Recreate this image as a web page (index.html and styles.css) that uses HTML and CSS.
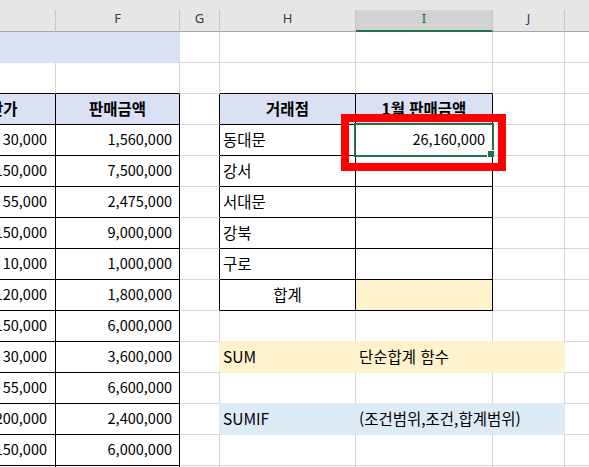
FILE: index.html
```html
<!DOCTYPE html>
<html lang="ko">
<head>
<meta charset="utf-8">
<title>SUMIF</title>
<link rel="stylesheet" href="styles.css">
</head>
<body>
<div class="sheet">
  <div class="row colhead">
    <div class="ch">E</div><div class="ch">F</div><div class="ch">G</div><div class="ch">H</div><div class="ch ch-sel">I</div><div class="ch">J</div><div class="ch">K</div>
  </div>
  <div class="row">
    <div class="c title"></div><div class="c title"></div><div class="c"></div><div class="c"></div><div class="c"></div><div class="c"></div><div class="c"></div>
  </div>
  <div class="row">
    <div class="c bbk"></div><div class="c bbk"></div><div class="c"></div><div class="c bbk"></div><div class="c bbk"></div><div class="c"></div><div class="c"></div>
  </div>
  <div class="row">
    <div class="c bx hd e">판매단가</div><div class="c bx hd">판매금액</div><div class="c brk"></div><div class="c bx hd">거래점</div><div class="c bx hd">1월 판매금액</div><div class="c"></div><div class="c"></div>
  </div>
  <div class="row">
    <div class="c bx num e">30,000</div><div class="c bx num">1,560,000</div><div class="c brk"></div><div class="c bx txt">동대문</div>
    <div class="c bx num active">26,160,000<span class="sel"><span class="handle"></span></span><span class="callout"></span></div>
    <div class="c"></div><div class="c"></div>
  </div>
  <div class="row">
    <div class="c bx num e">150,000</div><div class="c bx num">7,500,000</div><div class="c brk"></div><div class="c bx txt">강서</div><div class="c bx"></div><div class="c"></div><div class="c"></div>
  </div>
  <div class="row">
    <div class="c bx num e">55,000</div><div class="c bx num">2,475,000</div><div class="c brk"></div><div class="c bx txt">서대문</div><div class="c bx"></div><div class="c"></div><div class="c"></div>
  </div>
  <div class="row">
    <div class="c bx num e">150,000</div><div class="c bx num">9,000,000</div><div class="c brk"></div><div class="c bx txt">강북</div><div class="c bx"></div><div class="c"></div><div class="c"></div>
  </div>
  <div class="row">
    <div class="c bx num e">10,000</div><div class="c bx num">1,000,000</div><div class="c brk"></div><div class="c bx txt">구로</div><div class="c bx"></div><div class="c"></div><div class="c"></div>
  </div>
  <div class="row">
    <div class="c bx num e">120,000</div><div class="c bx num">1,800,000</div><div class="c brk"></div><div class="c bx txt center">합계</div><div class="c bx total"></div><div class="c"></div><div class="c"></div>
  </div>
  <div class="row">
    <div class="c bx num e">150,000</div><div class="c bx num">6,000,000</div><div class="c"></div><div class="c"></div><div class="c"></div><div class="c"></div><div class="c"></div>
  </div>
  <div class="row">
    <div class="c bx num e">30,000</div><div class="c bx num">3,600,000</div><div class="c"></div><div class="c band-y txt">SUM</div><div class="c band-y txt spill">단순합계 함수</div><div class="c band-y"></div><div class="c"></div>
  </div>
  <div class="row">
    <div class="c bx num e">55,000</div><div class="c bx num">6,600,000</div><div class="c"></div><div class="c"></div><div class="c"></div><div class="c"></div><div class="c"></div>
  </div>
  <div class="row">
    <div class="c bx num e">200,000</div><div class="c bx num">2,400,000</div><div class="c"></div><div class="c band-b txt">SUMIF</div><div class="c band-b txt spill">(조건범위,조건,합계범위)</div><div class="c band-b"></div><div class="c"></div>
  </div>
  <div class="row">
    <div class="c bx num e">150,000</div><div class="c bx num">6,000,000</div><div class="c"></div><div class="c"></div><div class="c"></div><div class="c"></div><div class="c"></div>
  </div>
  <div class="row">
    <div class="c bx"></div><div class="c bx"></div><div class="c"></div><div class="c"></div><div class="c"></div><div class="c"></div><div class="c"></div>
  </div>
</div>
</body>
</html>
```
FILE: styles.css
```css
html, body {
  margin: 0;
  padding: 0;
  background: #ffffff;
  overflow: hidden;
}
body {
  width: 589px;
  height: 467px;
  font-family: "Noto Sans CJK KR", "Noto Sans", sans-serif;
  font-size: 15.5px;
  color: #000;
}
.sheet {
  margin-left: -79px;
  width: 700px;
}
.row {
  display: grid;
  grid-template-columns: 135px 124px 40px 136px 137px 72px 56px;
  height: 31px;
}
.colhead {
  height: 32px;
  padding-top: 10px;
  background: #e6e6e6;
  box-sizing: border-box;
}
.ch {
  box-sizing: border-box;
  height: 22px;
  border-right: 1px solid #c8c8c8;
  border-bottom: 1px solid #a6a6a6;
  font-family: "Noto Sans", sans-serif;
  font-size: 13px;
  line-height: 17px;
  color: #3a3a3a;
  text-align: center;
}
.ch-sel {
  background: #d2d2d2;
  border-bottom: 2px solid #217346;
  color: #1d6a40;
}
.c {
  box-sizing: border-box;
  height: 31px;
  border-right: 1px solid #d6d6d6;
  border-bottom: 1px solid #d6d6d6;
  line-height: 28px;
  white-space: nowrap;
  overflow: visible;
}
.bx { border-right-color: #000; border-bottom-color: #000; }
.bbk { border-bottom-color: #000; }
.brk { border-right-color: #000; }
.title {
  background: #d9e1f2;
  border-color: #d9e1f2;
}
.hd {
  background: #d9e1f2;
  font-weight: 700;
  text-align: center;
}
.hd.e { padding-left: 2px; }
.num {
  text-align: right;
  padding-right: 7px;
  font-size: 14.5px;
}
.num.e { padding-right: 8px; }
.txt { padding-left: 3px; }
.center { text-align: center; padding-left: 0; }
.total { background: #fff2cc; }
.band-y {
  background: #fff2cc;
  border-color: #fff2cc;
  box-shadow: -1px -1px 0 0 #fff2cc;
}
.band-b {
  background: #ddebf7;
  border-color: #ddebf7;
  box-shadow: -1px -1px 0 0 #ddebf7;
}
.spill {
  position: relative;
  z-index: 1;
}
.active { position: relative; }
.sel {
  position: absolute;
  left: -2px;
  top: -2px;
  width: 140px;
  height: 34px;
  box-sizing: border-box;
  border: 2px solid #217346;
}
.handle {
  position: absolute;
  right: -2px;
  bottom: -2px;
  width: 7px;
  height: 7px;
  box-sizing: border-box;
  background: #217346;
  border-top: 1px solid #fff;
  border-left: 1px solid #fff;
}
.callout {
  position: absolute;
  left: -15px;
  top: -11px;
  width: 165px;
  height: 57px;
  box-sizing: border-box;
  border: 8px solid #ff0000;
}
```
